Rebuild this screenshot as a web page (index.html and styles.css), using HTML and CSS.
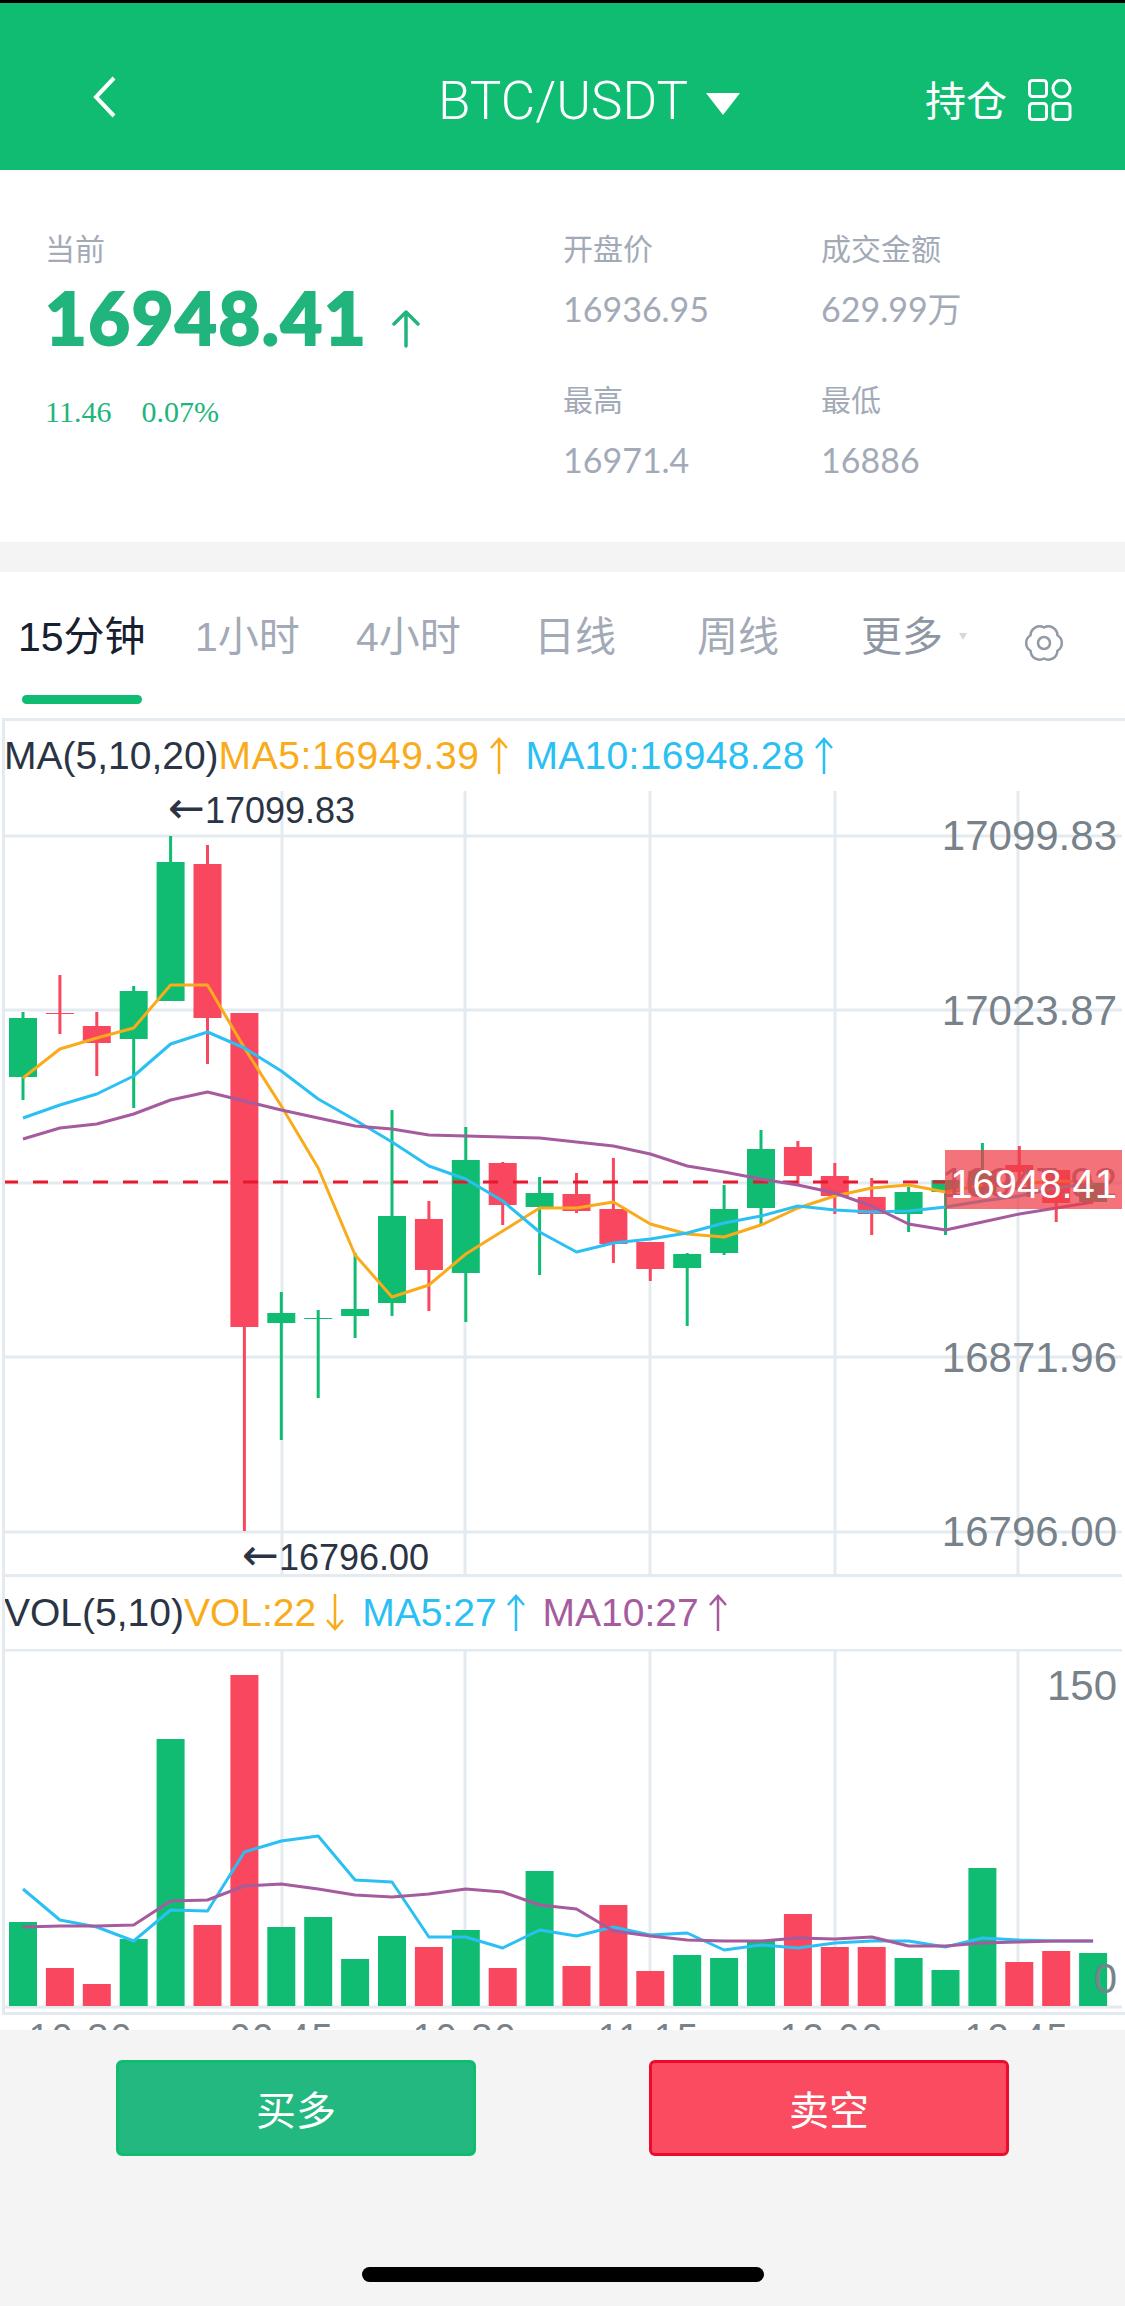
FILE: index.html
```html
<!DOCTYPE html>
<html lang="zh">
<head>
    <meta charset="UTF-8">
    <meta name="viewport" content="width=device-width, initial-scale=1.0">
    <title>BTC/USDT</title>
    <link rel="stylesheet" href="styles.css">
</head>
<body>
    <div class="page">
        <header class="topbar">
            <svg class="back-icon" viewBox="0 0 24 42"><path d="M21 2 L3 21 L21 40"/></svg>
            <div class="pair">
                <span>BTC/USDT</span>
                <i class="pair-caret"></i>
            </div>
            <div class="topbar-right">
                <span>持仓</span>
                <svg class="grid-icon" viewBox="0 0 44 42">
                    <rect x="1.5" y="1.5" width="17" height="16" rx="3"/>
                    <circle cx="33.5" cy="9.5" r="8.5"/>
                    <rect x="1.5" y="24.5" width="17" height="16" rx="3"/>
                    <rect x="25" y="24.5" width="17" height="16" rx="3"/>
                </svg>
            </div>
        </header>

        <section class="quote">
            <div class="quote-main">
                <div class="stat-label">当前</div>
                <div class="price">
                    <span>16948.41</span>
                    <svg class="price-arrow" viewBox="0 0 30 38"><path d="M15 36 V2 M3 14 L15 2 L27 14"/></svg>
                </div>
                <div class="change"><span>11.46</span><span>0.07%</span></div>
            </div>
            <div class="quote-stats">
                <div class="stat"><div class="stat-label">开盘价</div><div class="stat-value">16936.95</div></div>
                <div class="stat"><div class="stat-label">成交金额</div><div class="stat-value">629.99万</div></div>
                <div class="stat"><div class="stat-label">最高</div><div class="stat-value">16971.4</div></div>
                <div class="stat"><div class="stat-label">最低</div><div class="stat-value">16886</div></div>
            </div>
        </section>

        <nav class="tabs">
            <div class="tab tab-active">15分钟</div>
            <div class="tab tab-1h">1小时</div>
            <div class="tab tab-4h">4小时</div>
            <div class="tab tab-day">日线</div>
            <div class="tab tab-week">周线</div>
            <div class="tab tab-more">更多<i class="more-caret"></i></div>
            <svg class="gear-icon" viewBox="0 0 40 40">
                <path d="M20 4.5 A9 9 0 0 1 33.4 12.25 A9 9 0 0 1 33.4 27.75 A9 9 0 0 1 20 35.5 A9 9 0 0 1 6.6 27.75 A9 9 0 0 1 6.6 12.25 A9 9 0 0 1 20 4.5 Z"/>
                <circle cx="20" cy="20" r="6"/>
            </svg>
        </nav>

        <section class="chart">
            <div class="legend legend-main">
                <span>MA(5,10,20)</span>
                <div class="legend-item c-orange"><span>MA5:16949.39</span><svg class="arrow" viewBox="0 0 20 37"><path d="M10 37 V2 M2 11 L10 2 L18 11"/></svg></div>
                <div class="legend-item c-blue"><span>MA10:16948.28</span><svg class="arrow" viewBox="0 0 20 37"><path d="M10 37 V2 M2 11 L10 2 L18 11"/></svg></div>
            </div>
            <svg id="kline" class="plot" width="1125" height="786" viewBox="0 791 1125 786"></svg>
            <div class="legend legend-vol">
                <span>VOL(5,10)</span>
                <div class="legend-item c-orange"><span>VOL:22</span><svg class="arrow" viewBox="0 0 20 37"><path d="M10 0 V35 M2 26 L10 35 L18 26"/></svg></div>
                <div class="legend-item c-blue"><span>MA5:27</span><svg class="arrow" viewBox="0 0 20 37"><path d="M10 37 V2 M2 11 L10 2 L18 11"/></svg></div>
                <div class="legend-item c-purple"><span>MA10:27</span><svg class="arrow" viewBox="0 0 20 37"><path d="M10 37 V2 M2 11 L10 2 L18 11"/></svg></div>
            </div>
            <svg id="vol" class="plot" width="1125" height="360" viewBox="0 1649 1125 360"></svg>
            <div class="time-axis">
                <span>10:30</span><span>09:45</span><span>10:30</span><span>11:15</span><span>12:00</span><span>12:45</span>
            </div>
        </section>

        <footer class="actions">
            <div class="action-buttons">
                <button class="btn btn-buy">买多</button>
                <button class="btn btn-sell">卖空</button>
            </div>
            <div class="home-bar"></div>
        </footer>
    </div>

    <script src="chart.js"></script>
</body>
</html>
```

FILE: styles.css
```css
* {
    margin: 0;
    padding: 0;
    box-sizing: border-box;
}

body {
    font-family: "Liberation Sans", "Noto Sans CJK SC", sans-serif;
    background: #f4f4f4;
}

.page {
    width: 1125px;
    height: 2306px;
    overflow: hidden;
    display: flex;
    flex-direction: column;
}

/* top bar */
.topbar {
    height: 170px;
    flex-shrink: 0;
    background: #0fbc72;
    border-top: 3px solid #000;
    color: #fff;
    display: flex;
    align-items: flex-start;
    position: relative;
}

.back-icon {
    width: 24px;
    height: 42px;
    margin: 73px 0 0 93px;
    fill: none;
    stroke: #fff;
    stroke-width: 4;
}

.pair {
    margin: 70px 0 0 321px;
    display: flex;
    align-items: center;
    font-family: Roboto, "Liberation Sans", sans-serif;
    font-weight: 300;
    font-size: 53px;
    line-height: 56px;
}

.pair-caret {
    margin: 6px 0 0 18px;
    border-left: 17px solid transparent;
    border-right: 17px solid transparent;
    border-top: 22px solid #fff;
}

.topbar-right {
    margin: 74px 0 0 auto;
    padding-right: 53px;
    display: flex;
    align-items: center;
    font-size: 41px;
    line-height: 50px;
}

.grid-icon {
    width: 44px;
    height: 42px;
    margin: -4px 0 0 21px;
    fill: none;
    stroke: #fff;
    stroke-width: 3;
}

/* quote block */
.quote {
    height: 372px;
    flex-shrink: 0;
    background: #fff;
    display: flex;
    padding: 60px 0 0 45px;
}

.quote-main {
    width: 518px;
}

.stat-label {
    font-size: 30px;
    line-height: 40px;
    color: #a3aab7;
}

.price {
    margin-top: 7px;
    display: flex;
    align-items: flex-end;
    font-family: Lato, sans-serif;
    font-weight: 900;
    font-size: 72px;
    line-height: 80px;
    letter-spacing: 1.6px;
    -webkit-text-stroke: 2px #21b47c;
    color: #21b47c;
}

.price-arrow {
    width: 30px;
    height: 38px;
    margin: 0 0 9px 24px;
    fill: none;
    stroke: #21b47c;
    stroke-width: 3.5;
    stroke-linecap: round;
    stroke-linejoin: round;
}

.change {
    margin-top: 35px;
    display: flex;
    gap: 30px;
    font-family: "Liberation Serif", serif;
    font-size: 30px;
    line-height: 40px;
    color: #21b47c;
}

.quote-stats {
    display: grid;
    grid-template-columns: 258px 258px;
    grid-auto-rows: 151px;
}

.stat-value {
    margin-top: 18px;
    font-family: Lato, "Noto Sans CJK SC", sans-serif;
    font-size: 34px;
    line-height: 42px;
    color: #a3aab7;
}

/* period tabs */
.tabs {
    margin-top: 30px;
    height: 146px;
    flex-shrink: 0;
    background: #fff;
    display: flex;
    align-items: flex-start;
    padding-top: 40px;
    position: relative;
    color: #a3aab7;
    font-size: 41px;
    line-height: 50px;
}

.tab {
    flex-shrink: 0;
}

.tab-active {
    margin-left: 18px;
    width: 177px;
    color: #16202f;
}

.tab-active::after {
    content: "";
    position: absolute;
    left: 22px;
    top: 123px;
    width: 120px;
    height: 9px;
    border-radius: 5px;
    background: #10bb72;
}

.tab-1h {
    width: 161px;
}

.tab-4h {
    width: 178px;
}

.tab-day {
    width: 163px;
}

.tab-week {
    width: 164px;
}

.tab-more {
    display: flex;
    width: 163px;
    color: #8f96a3;
}

.more-caret {
    margin: 21px 0 0 16px;
    border-left: 4px solid transparent;
    border-right: 4px solid transparent;
    border-top: 7px solid #d4d8de;
}

.gear-icon {
    width: 40px;
    height: 40px;
    margin-top: 11px;
    fill: none;
    stroke: #9199a5;
    stroke-width: 2.5;
    stroke-linejoin: round;
}

/* chart */
.chart {
    height: 1312px;
    flex-shrink: 0;
    background: #fff;
    overflow: hidden;
    position: relative;
}

.chart::before {
    content: "";
    position: absolute;
    left: 2px;
    top: 0;
    width: 1121px;
    height: 1291px;
    border: 3px solid #e3ebf0;
    pointer-events: none;
}

.legend {
    display: flex;
    align-items: flex-start;
    padding-left: 4px;
    font-size: 39px;
    line-height: 45px;
    color: #2b3444;
    white-space: nowrap;
}

.legend-main {
    height: 73px;
    padding-top: 15px;
}

.legend-vol {
    height: 72px;
    padding-top: 13px;
}

.legend-item {
    display: flex;
    align-items: center;
    margin-right: 17px;
}

.legend-main .c-orange span {
    letter-spacing: 0.6px;
}

.legend-main .c-blue span {
    letter-spacing: 0.3px;
}

.arrow {
    width: 20px;
    height: 37px;
    margin-left: 9px;
    fill: none;
    stroke: currentColor;
    stroke-width: 2.5;
}

.c-orange {
    color: #f9ab1b;
}

.c-blue {
    color: #2bc0f3;
}

.c-purple {
    color: #a65b9e;
}

.plot {
    display: block;
}

.grid-line {
    stroke: #e3ebf0;
    stroke-width: 3;
}

.candle-up {
    fill: #0fbc72;
}

.candle-down {
    fill: #f8475e;
}

.ma-line {
    fill: none;
    stroke-width: 3;
    stroke-linejoin: round;
}

.ma-orange {
    stroke: #f9ab1b;
}

.ma-blue {
    stroke: #2bc0f3;
}

.ma-purple {
    stroke: #a65b9e;
}

.last-line {
    stroke: #e8192c;
    stroke-width: 3;
    stroke-dasharray: 15 15;
}

.axis-label {
    font-size: 42px;
    fill: #78828a;
    text-anchor: end;
}

.extreme-label {
    font-size: 36px;
    fill: #2b3444;
}

.extreme-arrow {
    font-family: "DejaVu Sans", sans-serif;
    font-size: 44px;
}

.last-box {
    fill: rgba(240, 60, 70, 0.72);
}

.last-label {
    font-size: 40px;
    fill: #fff;
    text-anchor: end;
}

.time-axis {
    position: relative;
    height: 21px;
    font-size: 38px;
    line-height: 48px;
    letter-spacing: 2px;
    color: #78828a;
    overflow: hidden;
}

.time-axis span {
    position: absolute;
    top: 5px;
    width: 120px;
    text-align: center;
}

.time-axis span:nth-child(1) { left: 21px; }
.time-axis span:nth-child(2) { left: 222px; }
.time-axis span:nth-child(3) { left: 405px; }
.time-axis span:nth-child(4) { left: 589px; }
.time-axis span:nth-child(5) { left: 772px; }
.time-axis span:nth-child(6) { left: 957px; }

/* bottom buttons */
.actions {
    flex: 1;
    background: #f4f4f4;
    padding-top: 30px;
}

.action-buttons {
    display: flex;
    justify-content: space-between;
    padding: 0 116px;
}

.btn {
    width: 360px;
    height: 96px;
    border-radius: 6px;
    border: 3px solid;
    color: #fff;
    font-family: inherit;
    font-size: 40px;
}

.btn-buy {
    background: #22b87f;
    border-color: #10bd70;
}

.btn-sell {
    background: #fa4b60;
    border-color: #ee0a2d;
}

.home-bar {
    width: 402px;
    height: 15px;
    margin: 111px 0 0 362px;
    border-radius: 8px;
    background: #000;
}
```

FILE: chart.js
```js
// candles: [up, wick top, wick bottom, body top, body bottom]
const candles = [
    [1, 1012, 1100, 1018, 1077], [0, 975, 1034, 1013, 1014], [0, 1012, 1076, 1026, 1043],
    [1, 986, 1108, 991, 1039], [1, 836, 1001, 862, 1001], [0, 845, 1064, 864, 1018],
    [0, 1013, 1531, 1013, 1327], [1, 1292, 1440, 1313, 1323], [1, 1310, 1398, 1318, 1319],
    [1, 1253, 1338, 1309, 1316], [1, 1110, 1316, 1216, 1303], [0, 1201, 1311, 1219, 1270],
    [1, 1127, 1322, 1160, 1273], [0, 1162, 1225, 1163, 1205], [1, 1177, 1275, 1193, 1207],
    [0, 1173, 1213, 1194, 1211], [0, 1158, 1263, 1209, 1244], [0, 1242, 1281, 1242, 1269],
    [1, 1253, 1326, 1254, 1268], [1, 1185, 1255, 1209, 1253], [1, 1130, 1224, 1149, 1208],
    [0, 1141, 1185, 1147, 1176], [0, 1163, 1214, 1176, 1196], [0, 1178, 1235, 1197, 1214],
    [1, 1187, 1232, 1192, 1214], [1, 1180, 1235, 1180, 1192], [1, 1143, 1193, 1171, 1193],
    [0, 1146, 1190, 1165, 1172], [0, 1170, 1222, 1170, 1203], [1, 1183, 1202, 1183, 1202]
];

// moving averages of the price chart, y pixels
const ma5 = [1078, 1049, 1038, 1028, 985, 985, 1048, 1106, 1168, 1255, 1297, 1285, 1254, 1231, 1208, 1208,
    1202, 1224, 1234, 1237, 1225, 1208, 1196, 1188, 1185, 1192, 1185, 1184, 1181, 1182];
const ma10 = [1118, 1105, 1094, 1076, 1044, 1032, 1048, 1071, 1099, 1120, 1142, 1166, 1179, 1201, 1232, 1252,
    1243, 1239, 1233, 1223, 1216, 1206, 1210, 1212, 1211, 1207, 1201, 1196, 1188, 1183];
const ma20 = [1139, 1128, 1124, 1114, 1100, 1092, 1101, 1110, 1118, 1126, 1129, 1135, 1136, 1137, 1138, 1142,
    1146, 1154, 1166, 1172, 1179, 1185, 1193, 1206, 1224, 1230, 1222, 1214, 1208, 1202];

// volume bars and their averages, y pixels
const volTops = [1922, 1968, 1984, 1939, 1739, 1925, 1675, 1927, 1917, 1959, 1936, 1947, 1930, 1968, 1871, 1966,
    1905, 1971, 1955, 1958, 1940, 1914, 1947, 1947, 1958, 1970, 1868, 1962, 1951, 1953];
const volMa5 = [1889, 1920, 1927, 1941, 1910, 1911, 1852, 1841, 1836, 1880, 1882, 1937, 1937, 1948, 1930, 1936,
    1927, 1935, 1933, 1950, 1945, 1948, 1943, 1941, 1941, 1947, 1938, 1940, 1941, 1941];
const volMa10 = [1927, 1926, 1926, 1925, 1901, 1900, 1886, 1884, 1889, 1895, 1897, 1894, 1889, 1892, 1905, 1909,
    1931, 1936, 1940, 1941, 1941, 1938, 1939, 1937, 1946, 1946, 1943, 1942, 1941, 1941];

const gridX = [282, 465, 650, 835, 1018];
const SVG_NS = 'http://www.w3.org/2000/svg';

function add(svg, tag, attrs, text) {
    const el = document.createElementNS(SVG_NS, tag);
    Object.keys(attrs).forEach(k => el.setAttribute(k, attrs[k]));
    if (text) el.textContent = text;
    svg.appendChild(el);
    return el;
}

function candleX(i) {
    return 23 + i * 36.9;
}

function hLine(svg, y) {
    add(svg, 'line', { class: 'grid-line', x1: 3, x2: 1122, y1: y, y2: y });
}

function vLines(svg, y1, y2) {
    gridX.forEach(x => add(svg, 'line', { class: 'grid-line', x1: x, x2: x, y1: y1, y2: y2 }));
}

function maLine(svg, values, color) {
    const points = values.map((y, i) => candleX(i).toFixed(1) + ',' + y).join(' ');
    add(svg, 'polyline', { class: 'ma-line ' + color, points: points });
}

function bar(svg, up, x, y, w, h) {
    add(svg, 'rect', { class: up ? 'candle-up' : 'candle-down', x: x, y: y, width: w, height: h });
}

function extremeLabel(svg, x, y, value) {
    const label = add(svg, 'text', { class: 'extreme-label', x: x, y: y });
    add(label, 'tspan', { class: 'extreme-arrow' }, '←');
    add(label, 'tspan', {}, value);
}

// price chart
const kline = document.getElementById('kline');
[836, 1010, 1183, 1357, 1532, 1575.5].forEach(y => hLine(kline, y));
vLines(kline, 791, 1575);

candles.forEach((c, i) => {
    const x = candleX(i);
    bar(kline, c[0], x - 1.5, c[1], 3, c[2] - c[1]);
    bar(kline, c[0], x - 14, c[3], 28, c[4] - c[3]);
});

add(kline, 'line', { class: 'last-line', x1: 3, x2: 945, y1: 1182, y2: 1182 });
maLine(kline, ma5, 'ma-orange');
maLine(kline, ma10, 'ma-blue');
maLine(kline, ma20, 'ma-purple');

extremeLabel(kline, 168, 823, '17099.83');
extremeLabel(kline, 242, 1570, '16796.00');

[[850, '17099.83'], [1025, '17023.87'], [1197, '16947.92'], [1372, '16871.96'], [1546, '16796.00']].forEach(l => {
    add(kline, 'text', { class: 'axis-label', x: 1117, y: l[0] }, l[1]);
});

add(kline, 'rect', { class: 'last-box', x: 945, y: 1150, width: 177, height: 59 });
add(kline, 'text', { class: 'last-label', x: 1117, y: 1198 }, '16948.41');

// volume chart
const vol = document.getElementById('vol');
hLine(vol, 1650);
hLine(vol, 2007);
vLines(vol, 1650, 2006);

volTops.forEach((top, i) => {
    bar(vol, candles[i][0], candleX(i) - 14, top, 28, 2006 - top);
});

maLine(vol, volMa5, 'ma-blue');
maLine(vol, volMa10, 'ma-purple');

add(vol, 'text', { class: 'axis-label', x: 1117, y: 1700 }, '150');
add(vol, 'text', { class: 'axis-label', x: 1117, y: 1993 }, '0');
```
